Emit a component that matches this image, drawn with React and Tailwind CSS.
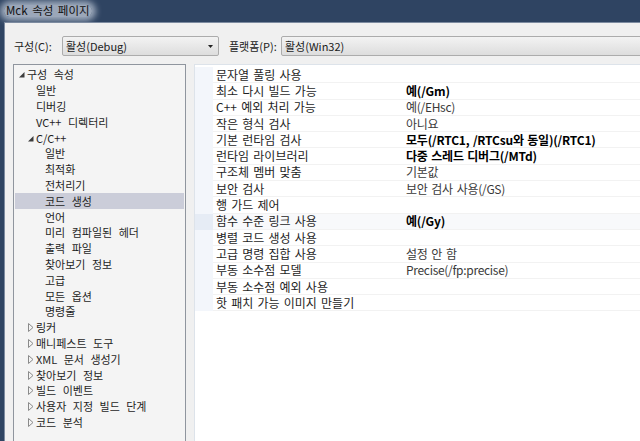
import React from 'react';

const tree = [
  { label: '구성 속성', level: 0, arrow: 'open' },
  { label: '일반', level: 1 },
  { label: '디버깅', level: 1 },
  { label: 'VC++ 디렉터리', level: 1 },
  { label: 'C/C++', level: 1, arrow: 'open' },
  { label: '일반', level: 2 },
  { label: '최적화', level: 2 },
  { label: '전처리기', level: 2 },
  { label: '코드 생성', level: 2, selected: true },
  { label: '언어', level: 2 },
  { label: '미리 컴파일된 헤더', level: 2 },
  { label: '출력 파일', level: 2 },
  { label: '찾아보기 정보', level: 2 },
  { label: '고급', level: 2 },
  { label: '모든 옵션', level: 2 },
  { label: '명령줄', level: 2 },
  { label: '링커', level: 1, arrow: 'closed' },
  { label: '매니페스트 도구', level: 1, arrow: 'closed' },
  { label: 'XML 문서 생성기', level: 1, arrow: 'closed' },
  { label: '찾아보기 정보', level: 1, arrow: 'closed' },
  { label: '빌드 이벤트', level: 1, arrow: 'closed' },
  { label: '사용자 지정 빌드 단계', level: 1, arrow: 'closed' },
  { label: '코드 분석', level: 1, arrow: 'closed' },
];

const indent = { 0: 'pl-[4px]', 1: 'pl-[13px]', 2: 'pl-[22px]' };

const props = [
  ['문자열 풀링 사용', ''],
  ['최소 다시 빌드 가능', '예(/Gm)', true],
  ['C++ 예외 처리 가능', '예(/EHsc)'],
  ['작은 형식 검사', '아니요'],
  ['기본 런타임 검사', '모두(/RTC1, /RTCsu와 동일)(/RTC1)', true],
  ['런타임 라이브러리', '다중 스레드 디버그(/MTd)', true],
  ['구조체 멤버 맞춤', '기본값'],
  ['보안 검사', '보안 검사 사용(/GS)'],
  ['행 가드 제어', ''],
  ['함수 수준 링크 사용', '예(/Gy)', true, true],
  ['병렬 코드 생성 사용', ''],
  ['고급 명령 집합 사용', '설정 안 함'],
  ['부동 소수점 모델', 'Precise(/fp:precise)'],
  ['부동 소수점 예외 사용', ''],
  ['핫 패치 가능 이미지 만들기', ''],
];

const Arrow = ({ type }) => {
  if (type === 'open') {
    return (
      <svg width="6" height="6" viewBox="0 0 6 6" className="mt-[1px]">
        <polygon points="0,5.5 5.5,5.5 5.5,0" fill="#3c3c3c" />
      </svg>
    );
  }
  if (type === 'closed') {
    return (
      <svg width="6" height="9" viewBox="0 0 6 9">
        <polygon points="0.5,0.5 5,4.5 0.5,8.5" fill="none" stroke="#8a8a8a" strokeWidth="1" />
      </svg>
    );
  }
  return null;
};

const Combo = ({ text, className }) => (
  <div className={`h-[20px] flex items-center border border-[#acacac] rounded-[2px] bg-gradient-to-b from-[#f3f3f3] to-[#dddddd] pl-[3px] ${className}`}>
    <span className="flex-1 text-[#1b1b1b]">{text}</span>
    <span className="w-[16px] flex justify-center">
      <svg width="5" height="3" viewBox="0 0 5 3">
        <polygon points="0,0 5,0 2.5,3" fill="#222" />
      </svg>
    </span>
  </div>
);

const App = () => {
  return (
    <div className="w-[640px] h-[441px] overflow-hidden bg-[#2f4462] flex flex-col font-['Noto_Sans_CJK_KR',sans-serif] text-[11px] leading-none [word-spacing:4px]">
      {/* title bar */}
      <div className="h-[22px] flex items-center pl-[4px] shrink-0">
        <span className="text-[11.5px] text-[#111] px-[2px] [word-spacing:2px] bg-[#c9d2de]/70 rounded-[6px] shadow-[0_0_6px_4px_rgba(205,214,226,0.7)]">
          Mck 속성 페이지
        </span>
      </div>

      <div className="flex-1 flex min-h-0">
        <div className="w-[4px] shrink-0" />
        <div className="flex-1 bg-[#f0f0f0] border-l border-t border-[#7d8ba0] flex flex-col pl-[8px] min-w-0">
          {/* toolbar */}
          <div className="flex items-center pt-[13px] shrink-0">
            <span className="w-[49px] pl-[1px] text-[#222]">구성(C):</span>
            <Combo text="활성(Debug)" className="w-[157px]" />
            <span className="w-[62px] pl-[10px] text-[#222]">플랫폼(P):</span>
            <Combo text="활성(Win32)" className="flex-1 -mr-[20px]" />
          </div>

          {/* content */}
          <div className="flex mt-[8px] flex-1 min-h-0">
            {/* tree */}
            <div className="w-[173px] shrink-0 h-[400px] border border-[#8f959e] bg-[#f4f4f4] pt-[2px]">
              {tree.map((t, i) => (
                <div
                  key={i}
                  className={`h-[15.8px] flex items-center mx-[1px] ${indent[t.level]} ${t.selected ? 'bg-[#cbcdd9]' : ''}`}
                >
                  <span className="w-[8px] flex items-center shrink-0">
                    <Arrow type={t.arrow} />
                  </span>
                  <span className="text-[#1e1e1e] whitespace-nowrap">{t.label}</span>
                </div>
              ))}
            </div>

            {/* property grid */}
            <div className="ml-[8px] flex-1 h-[400px] bg-white border-t border-l border-[#dde3ea] -mr-[2px] text-[12px] [word-spacing:1.5px]">
              <div className="flex flex-col pt-[2px]">
                {props.map(([name, value, bold, sel], i) => (
                  <div key={i} className={`h-[16.3px] flex ${sel ? 'bg-[#f8f9fb]' : ''}`}>
                    <div className={`w-[18px] shrink-0 ${sel ? 'bg-[#e6ecf5]' : 'bg-[#f3f6fb]'}`} />
                    <div className="w-[190px] shrink-0 flex items-center pl-[3px] border-b border-[#f2f2f2] text-[#1e1e1e] whitespace-nowrap">
                      {name}
                    </div>
                    <div
                      className={`flex-1 flex items-center pl-[3px] border-b border-[#f2f2f2] whitespace-nowrap ${
                        bold ? 'font-bold text-[#000] tracking-[-0.2px] [word-spacing:1px]' : 'text-[#3a3a3a] tracking-[-0.3px]'
                      }`}
                    >
                      {value}
                    </div>
                  </div>
                ))}
              </div>
            </div>
          </div>
        </div>
      </div>
    </div>
  );
};

export default App;
